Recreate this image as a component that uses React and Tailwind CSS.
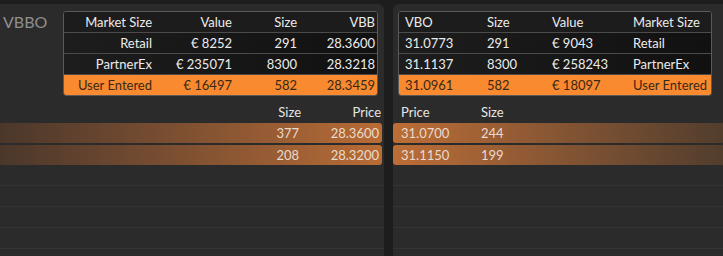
const bidRows = [
  { market: 'Retail', value: '€ 8252', size: '291', px: '28.3600' },
  { market: 'PartnerEx', value: '€ 235071', size: '8300', px: '28.3218' },
];
const bidUser = { market: 'User Entered', value: '€ 16497', size: '582', px: '28.3459' };

const offerRows = [
  { px: '31.0773', size: '291', value: '€ 9043', market: 'Retail' },
  { px: '31.1137', size: '8300', value: '€ 258243', market: 'PartnerEx' },
];
const offerUser = { px: '31.0961', size: '582', value: '€ 18097', market: 'User Entered' };

const bidDepth = [
  { size: '377', px: '28.3600' },
  { size: '208', px: '28.3200' },
];
const offerDepth = [
  { px: '31.0700', size: '244' },
  { px: '31.1150', size: '199' },
];

const bidCols = 'grid grid-cols-[92px_80px_65px_78px] text-right [&>span]:pr-1';
const offerCols = 'grid grid-cols-[82px_65px_81px_86px] text-left [&>span]:pl-1.5';

const EmptyRows = () => (
  <div className="flex shrink-0 flex-col">
    {[0, 1, 2, 3, 4].map((i) => (
      <div key={i} className="h-[21px] shrink-0 border-b border-[#343434]" />
    ))}
  </div>
);

const App = () => {
  return (
    <div className="flex h-[256px] w-[723px] gap-[9px] overflow-hidden bg-[#1d1d1d] pt-1 font-['Lato',sans-serif] text-[13px] leading-none">
      {/* bid side */}
      <div className="flex w-[384px] flex-col overflow-hidden rounded-tr-md bg-[#2b2b2b]">
        <div className="flex h-[98px] shrink-0 items-start pt-[7px]">
          <span className="w-[63px] pl-[3px] pt-[3px] text-[16px] text-[#8f8f8f]">VBBO</span>
          <div className="w-[315px] overflow-hidden rounded-[3px] border border-[#5a5a5a] bg-[#161616] text-[#ececec]">
            <div className={`${bidCols} h-[20px] items-center bg-[#1c1c1c]`}>
              <span>Market Size</span><span>Value</span><span>Size</span><span>VBB</span>
            </div>
            {bidRows.map((r) => (
              <div key={r.market} className={`${bidCols} h-[21px] items-center border-t border-[#4b4b4b] bg-gradient-to-r from-[#1d1d1d] to-[#111111]`}>
                <span>{r.market}</span><span>{r.value}</span><span>{r.size}</span><span>{r.px}</span>
              </div>
            ))}
            <div className={`${bidCols} h-[21px] items-center border-t border-[#4b4b4b] bg-[#f98a2f] text-[#3a2816]`}>
              <span>{bidUser.market}</span><span>{bidUser.value}</span><span>{bidUser.size}</span><span>{bidUser.px}</span>
            </div>
          </div>
        </div>

        <div className="grid h-[21px] shrink-0 grid-cols-[1fr_70px_80px] items-center text-right text-[#e6e6e6] [&>span]:pr-[3px]">
          <span /><span>Size</span><span>Price</span>
        </div>
        <div className="flex shrink-0 flex-col gap-[2px] pr-[2px]">
          {bidDepth.map((r) => (
            <div key={r.px} className="grid h-[20px] grid-cols-[1fr_70px_80px] items-center rounded-r-[3px] bg-gradient-to-r from-[#4b372a] to-[#b96c35] text-right text-[#eadbcc] [&>span]:pr-[3px]">
              <span /><span>{r.size}</span><span>{r.px}</span>
            </div>
          ))}
        </div>
        <EmptyRows />
      </div>

      {/* offer side */}
      <div className="flex flex-1 flex-col overflow-hidden rounded-tl-md bg-[#2b2b2b]">
        <div className="flex h-[98px] shrink-0 items-start pl-[5px] pt-[7px]">
          <div className="w-[314px] overflow-hidden rounded-[3px] border border-[#5a5a5a] bg-[#161616] text-[#ececec]">
            <div className={`${offerCols} h-[20px] items-center bg-[#1c1c1c]`}>
              <span>VBO</span><span>Size</span><span>Value</span><span>Market Size</span>
            </div>
            {offerRows.map((r) => (
              <div key={r.market} className={`${offerCols} h-[21px] items-center border-t border-[#4b4b4b] bg-gradient-to-r from-[#1d1d1d] to-[#111111]`}>
                <span>{r.px}</span><span>{r.size}</span><span>{r.value}</span><span>{r.market}</span>
              </div>
            ))}
            <div className={`${offerCols} h-[21px] items-center border-t border-[#4b4b4b] bg-[#f98a2f] text-[#3a2816]`}>
              <span>{offerUser.px}</span><span>{offerUser.size}</span><span>{offerUser.value}</span><span>{offerUser.market}</span>
            </div>
          </div>
        </div>

        <div className="grid h-[21px] shrink-0 grid-cols-[80px_70px_1fr] items-center text-[#e6e6e6] [&>span]:pl-[8px]">
          <span>Price</span><span>Size</span><span />
        </div>
        <div className="flex shrink-0 flex-col gap-[2px]">
          {offerDepth.map((r) => (
            <div key={r.px} className="grid h-[20px] grid-cols-[80px_70px_1fr] items-center rounded-l-[3px] bg-gradient-to-r from-[#bd6e36] to-[#523d2d] text-[#eadbcc] [&>span]:pl-[8px]">
              <span>{r.px}</span><span>{r.size}</span><span />
            </div>
          ))}
        </div>
        <EmptyRows />
      </div>
    </div>
  );
};

export default App;
